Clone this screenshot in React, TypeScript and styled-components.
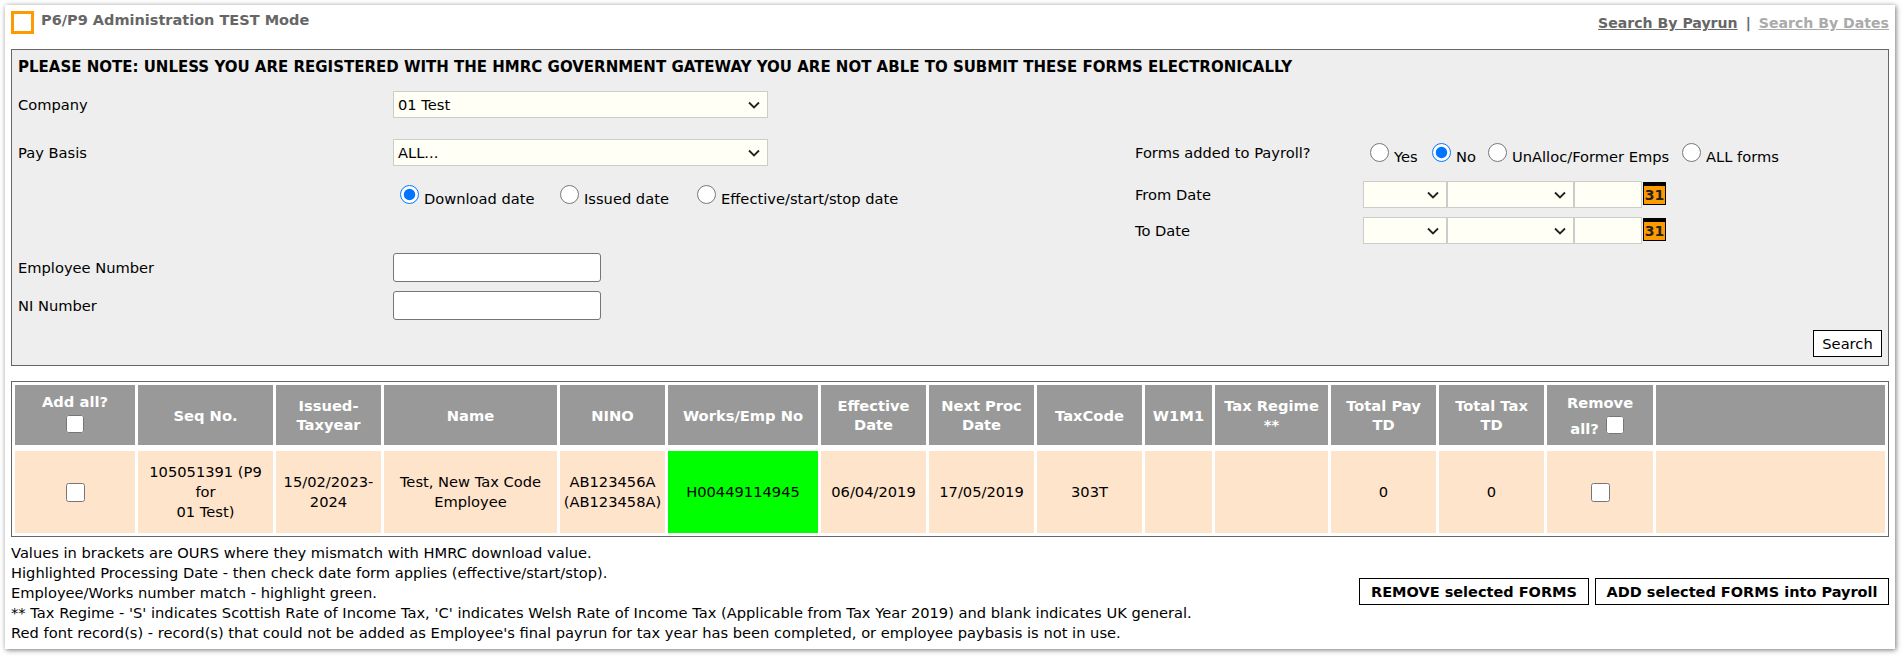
import { createGlobalStyle, styled } from "styled-components";

const chevron = `url("data:image/svg+xml,%3Csvg xmlns='http://www.w3.org/2000/svg' width='12' height='8'%3E%3Cpath d='M1 1.5l5 5 5-5' fill='none' stroke='%23222' stroke-width='1.8'/%3E%3C/svg%3E")`;

const GlobalStyle = createGlobalStyle`
  html, body {
    margin: 0;
    background: #fff;
  }
  body {
    font-family: "DejaVu Sans", Tahoma, sans-serif;
    font-size: 14.67px;
    color: #000;
  }
`;

const Page = styled.div`
  padding: 5px 9px 9px 5px;
`;

const Card = styled.div`
  background: #fff;
  padding: 6px;
  box-shadow: 1px 1px 5px rgba(0, 0, 0, 0.55);
`;

const TopBar = styled.div`
  display: flex;
  justify-content: space-between;
  height: 38px;
`;

const TitleWrap = styled.div`
  display: flex;
  gap: 7px;
`;

const Marker = styled.div`
  width: 23px;
  height: 23px;
  box-sizing: border-box;
  border: 3px solid #f90;
`;

const Title = styled.h1`
  margin: 0;
  font-size: 14.5px;
  font-weight: 700;
  line-height: 18px;
  color: #666;
`;

const TopLinks = styled.div`
  display: flex;
  gap: 8px;
  font-size: 14.1px;
  font-weight: 700;
  line-height: 24px;
  color: #666;
`;

const TopLink = styled.a<{ $muted?: boolean }>`
  color: ${(props) => (props.$muted ? "#aaa" : "#666")};
  text-decoration: underline;
`;

const Panel = styled.div`
  background: #eee;
  border: 1px solid #666;
  padding: 6px;
`;

const Note = styled.div`
  font-size: 15px;
  font-weight: 700;
  line-height: 22px;
  margin-bottom: 13px;
`;

const FormGrid = styled.div`
  display: grid;
  grid-template-columns: 375px 742px 228px 1fr;
  grid-template-rows: 48px 42px 36px 36px 38px 29px;
  align-items: start;
`;

const Label = styled.label<{ $col: number; $tall?: boolean }>`
  grid-column: ${(props) => props.$col};
  line-height: ${(props) => (props.$tall ? 30 : 28)}px;
`;

const Control = styled.div<{ $col: number; $inset?: number }>`
  grid-column: ${(props) => props.$col};
  display: flex;
  align-items: flex-start;
  padding-left: ${(props) => props.$inset ?? 0}px;
`;

const Select = styled.select<{ $width: number }>`
  appearance: none;
  width: ${(props) => props.$width}px;
  height: 27px;
  box-sizing: border-box;
  background: #fffff5 ${chevron} no-repeat right 7px center;
  border: 1px solid #ccc;
  border-radius: 0;
  padding: 0 0 0 4px;
  font: inherit;
  color: #000;
  margin: 0;
`;

const DateDay = styled.input`
  width: 68px;
  height: 27px;
  box-sizing: border-box;
  background: #fffff5;
  border: 1px solid #ccc;
  margin: 0;
`;

const CalIcon = styled.div`
  width: 23px;
  height: 23px;
  margin: 1px 0 0 1px;
  box-sizing: border-box;
  background: #f90;
  border: 1px solid #000;
  border-top-width: 4px;
  color: #222;
  font-size: 14px;
  font-weight: 700;
  line-height: 18px;
  text-align: center;
`;

const TextInput = styled.input`
  width: 208px;
  height: 29px;
  box-sizing: border-box;
  background: #fff;
  border: 1px solid #767676;
  border-radius: 3px;
  margin: 0;
`;

const RadioOption = styled.label<{ $width?: number }>`
  display: flex;
  align-items: flex-start;
  width: ${(props) => (props.$width ? `${props.$width}px` : "auto")};
  line-height: 20px;
`;

const Radio = styled.input.attrs({ type: "radio" })`
  width: 19px;
  height: 19px;
  margin: 4px 5px 0 4px;
  flex: none;
`;

const RadioText = styled.span`
  margin-top: 8px;
  white-space: nowrap;
`;

const SearchRow = styled.div`
  display: flex;
  justify-content: flex-end;
  margin-top: 10px;
  margin-bottom: 2px;
`;

const PlainButton = styled.button<{ $bold?: boolean; $width: number }>`
  width: ${(props) => props.$width}px;
  height: 27px;
  background: #fff;
  border: 1px solid #000;
  border-radius: 0;
  padding: 0;
  font: inherit;
  font-size: ${(props) => (props.$bold ? "14.5px" : "inherit")};
  font-weight: ${(props) => (props.$bold ? 700 : 400)};
  color: #000;
  white-space: nowrap;
`;

const TableBox = styled.div`
  margin-top: 15px;
  border: 1px solid #666;
  padding: 3px;
  display: grid;
  grid-template-columns: 120px 135px 105px 173px 105px 150px 105px 105px 105px 67px 113px 105px 105px 106px 1fr;
  grid-template-rows: 60px 82px;
  gap: 6px 3px;
`;

const HeadCell = styled.div`
  background: #999;
  color: #fff;
  font-size: 14.7px;
  font-weight: 700;
  line-height: 19px;
  text-align: center;
  display: flex;
  flex-direction: column;
  align-items: center;
  justify-content: center;
`;

const HeadInline = styled.div`
  display: flex;
  align-items: flex-start;
  gap: 7px;
  margin: 4px 6px 0 0;
`;

const HeadInlineText = styled.span`
  margin-top: 3px;
`;

const Cell = styled.div<{ $match?: boolean }>`
  background: ${(props) => (props.$match ? "#0f0" : "#ffe4cc")};
  line-height: 20px;
  text-align: center;
  display: flex;
  align-items: center;
  justify-content: center;
`;

const CheckBox = styled.input.attrs({ type: "checkbox" })<{ $size?: number }>`
  width: ${(props) => props.$size ?? 18}px;
  height: ${(props) => props.$size ?? 18}px;
  margin: 0;
`;

const AddAllCheck = styled(CheckBox)`
  margin: 4px 0 5px;
`;

const Footer = styled.div`
  display: flex;
  justify-content: space-between;
  align-items: center;
  margin-top: 6px;
`;

const Notes = styled.div`
  line-height: 20px;
`;

const Actions = styled.div`
  display: flex;
  gap: 6px;
  margin-bottom: 3px;
`;

const headers: string[][] = [
  ["Seq No."],
  ["Issued-", "Taxyear"],
  ["Name"],
  ["NINO"],
  ["Works/Emp No"],
  ["Effective", "Date"],
  ["Next Proc", "Date"],
  ["TaxCode"],
  ["W1M1"],
  ["Tax Regime", "**"],
  ["Total Pay", "TD"],
  ["Total Tax", "TD"],
];

const noteLines = [
  "Values in brackets are OURS where they mismatch with HMRC download value.",
  "Highlighted Processing Date - then check date form applies (effective/start/stop).",
  "Employee/Works number match - highlight green.",
  "** Tax Regime - 'S' indicates Scottish Rate of Income Tax, 'C' indicates Welsh Rate of Income Tax (Applicable from Tax Year 2019) and blank indicates UK general.",
  "Red font record(s) - record(s) that could not be added as Employee's final payrun for tax year has been completed, or employee paybasis is not in use.",
];

function DateFields() {
  return (
    <Control $col={4}>
      <Select $width={84} />
      <Select $width={127} />
      <DateDay />
      <CalIcon>31</CalIcon>
    </Control>
  );
}

function App() {
  return (
    <Page>
      <GlobalStyle />
      <Card>
        <TopBar>
          <TitleWrap>
            <Marker />
            <Title>P6/P9 Administration TEST Mode</Title>
          </TitleWrap>
          <TopLinks>
            <TopLink href="#">Search By Payrun</TopLink>
            <span>|</span>
            <TopLink href="#" $muted>Search By Dates</TopLink>
          </TopLinks>
        </TopBar>
        <Panel>
          <Note>PLEASE NOTE: UNLESS YOU ARE REGISTERED WITH THE HMRC GOVERNMENT GATEWAY YOU ARE NOT ABLE TO SUBMIT THESE FORMS ELECTRONICALLY</Note>
          <FormGrid>
            <Label $col={1}>Company</Label>
            <Control $col={2}>
              <Select $width={375}>
                <option>01 Test</option>
              </Select>
            </Control>
            <Label $col={1}>Pay Basis</Label>
            <Control $col={2}>
              <Select $width={375}>
                <option>ALL...</option>
              </Select>
            </Control>
            <Label $col={3}>Forms added to Payroll?</Label>
            <Control $col={4} $inset={3}>
              <RadioOption $width={62}><Radio name="added" /><RadioText>Yes</RadioText></RadioOption>
              <RadioOption $width={56}><Radio name="added" defaultChecked /><RadioText>No</RadioText></RadioOption>
              <RadioOption $width={194}><Radio name="added" /><RadioText>UnAlloc/Former Emps</RadioText></RadioOption>
              <RadioOption><Radio name="added" /><RadioText>ALL forms</RadioText></RadioOption>
            </Control>
            <Control $col={2} $inset={3}>
              <RadioOption $width={160}><Radio name="dateType" defaultChecked /><RadioText>Download date</RadioText></RadioOption>
              <RadioOption $width={137}><Radio name="dateType" /><RadioText>Issued date</RadioText></RadioOption>
              <RadioOption><Radio name="dateType" /><RadioText>Effective/start/stop date</RadioText></RadioOption>
            </Control>
            <Label $col={3}>From Date</Label>
            <DateFields />
            <Label $col={3}>To Date</Label>
            <DateFields />
            <Label $col={1} $tall>Employee Number</Label>
            <Control $col={2}><TextInput /></Control>
            <Label $col={1} $tall>NI Number</Label>
            <Control $col={2}><TextInput /></Control>
          </FormGrid>
          <SearchRow>
            <PlainButton $width={69}>Search</PlainButton>
          </SearchRow>
        </Panel>
        <TableBox>
          <HeadCell>
            Add all?
            <AddAllCheck />
          </HeadCell>
          {headers.map((lines) => (
            <HeadCell key={lines[0]}>
              {lines.map((line) => (
                <span key={line}>{line}</span>
              ))}
            </HeadCell>
          ))}
          <HeadCell>
            Remove
            <HeadInline><HeadInlineText>all?</HeadInlineText><CheckBox /></HeadInline>
          </HeadCell>
          <HeadCell />
          <Cell><CheckBox $size={19} /></Cell>
          <Cell>105051391 (P9<br />for<br />01 Test)</Cell>
          <Cell>15/02/2023-<br />2024</Cell>
          <Cell>Test, New Tax Code<br />Employee</Cell>
          <Cell>AB123456A<br />(AB123458A)</Cell>
          <Cell $match>H00449114945</Cell>
          <Cell>06/04/2019</Cell>
          <Cell>17/05/2019</Cell>
          <Cell>303T</Cell>
          <Cell />
          <Cell />
          <Cell>0</Cell>
          <Cell>0</Cell>
          <Cell><CheckBox $size={19} /></Cell>
          <Cell />
        </TableBox>
        <Footer>
          <Notes>
            {noteLines.map((line) => (
              <div key={line}>{line}</div>
            ))}
          </Notes>
          <Actions>
            <PlainButton $bold $width={230}>REMOVE selected FORMS</PlainButton>
            <PlainButton $bold $width={294}>ADD selected FORMS into Payroll</PlainButton>
          </Actions>
        </Footer>
      </Card>
    </Page>
  );
}

export default App;
